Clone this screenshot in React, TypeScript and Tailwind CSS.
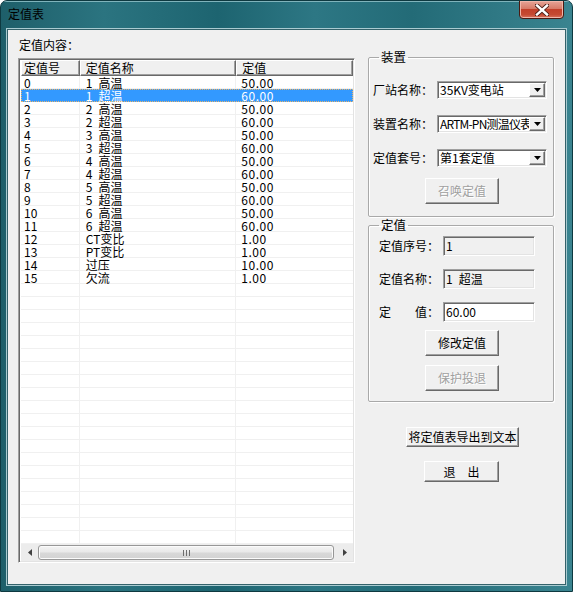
import React from "react";

const rows: [string, string, string][] = [
  ["0", "1\u2002高温", "50.00"],
  ["1", "1\u2002超温", "60.00"],
  ["2", "2\u2002高温", "50.00"],
  ["3", "2\u2002超温", "60.00"],
  ["4", "3\u2002高温", "50.00"],
  ["5", "3\u2002超温", "60.00"],
  ["6", "4\u2002高温", "50.00"],
  ["7", "4\u2002超温", "60.00"],
  ["8", "5\u2002高温", "50.00"],
  ["9", "5\u2002超温", "60.00"],
  ["10", "6\u2002高温", "50.00"],
  ["11", "6\u2002超温", "60.00"],
  ["12", "CT变比", "1.00"],
  ["13", "PT变比", "1.00"],
  ["14", "过压", "10.00"],
  ["15", "欠流", "1.00"],
];

const blank: [string, string, string][] = Array.from({ length: 21 }, () => ["", "", ""]);

const raised =
  "border border-t-white border-l-white border-r-[#696969] border-b-[#696969] shadow-[inset_-1px_-1px_0_#a0a0a0] bg-[#f0f0f0]";
const sunken =
  "border border-t-[#a0a0a0] border-l-[#a0a0a0] border-r-white border-b-white shadow-[inset_1px_1px_0_#696969,inset_-1px_-1px_0_#e3e3e3]";

function Btn({ label, disabled, className }: { label: string; disabled?: boolean; className: string }) {
  return (
    <button
      type="button"
      className={`${raised} ${className} flex items-center justify-center text-[12px] leading-[14px] ${
        disabled ? "text-[#a0a0a0] [text-shadow:1px_1px_0_#ffffff]" : "text-black"
      }`}
    >
      {label}
    </button>
  );
}

function Combo({ value, tight }: { value: string; tight?: boolean }) {
  return (
    <div className={`${sunken} w-[110px] h-[18px] bg-white flex items-center pl-[2px] pr-[1px]`}>
      <span
        className={`flex-1 overflow-hidden whitespace-nowrap leading-[14px] text-black ${
          tight ? "tracking-[-0.8px]" : ""
        }`}
      >
        {value}
      </span>
      <div className={`${raised} w-[16px] h-[14px] shrink-0 flex items-center justify-center`}>
        <svg width="7" height="4" viewBox="0 0 7 4">
          <path d="M0 0h7L3.5 4z" fill="#000" />
        </svg>
      </div>
    </div>
  );
}

function Field({ label, value, readOnly }: { label: string; value: string; readOnly?: boolean }) {
  return (
    <div className="flex items-center h-[20px]">
      <span className="w-[64px] shrink-0 leading-[14px] whitespace-pre">{label}</span>
      <div
        className={`${sunken} w-[92px] h-[20px] flex items-center pl-[2px] leading-[14px] whitespace-pre ${
          readOnly ? "bg-[#f0f0f0]" : "bg-white"
        }`}
      >
        {value}
      </div>
    </div>
  );
}

export default function App() {
  return (
    <div className="w-[573px] h-[592px] flex flex-col overflow-hidden rounded-t-[7px] border border-[#0e3940] bg-[linear-gradient(90deg,#1e5f6a_0%,#2b7480_18%,#1d6470_38%,#2d7784_55%,#236b77_72%,#3a8490_100%)] font-['Noto_Sans_CJK_SC',sans-serif] text-[12px] text-black">
      {/* Title bar */}
      <div className="h-[28px] shrink-0 flex items-start shadow-[inset_0_1px_0_#7fb3bb]">
        <span className="ml-[7px] mt-[5px] leading-[16px] text-[12px] text-black">定值表</span>
        <button
          type="button"
          className="ml-auto mr-[8px] -mt-px w-[45px] h-[19px] rounded-b-[4px] border border-[#4b1a12] bg-[linear-gradient(180deg,#e6a497_0%,#d77b68_45%,#c2402a_50%,#c54a32_80%,#d9745e_100%)] shadow-[inset_0_0_0_1px_#f0b6aa] flex items-center justify-center"
        >
          <svg width="14" height="12" viewBox="0 0 14 12">
            <path d="M2 1.5L12 10.5M12 1.5L2 10.5" stroke="#4a1d16" strokeWidth="4.2" strokeLinecap="square" />
            <path d="M2 1.5L12 10.5M12 1.5L2 10.5" stroke="#ffffff" strokeWidth="2.4" strokeLinecap="square" />
          </svg>
        </button>
      </div>

      {/* Client area */}
      <div className="mx-[6px] mb-[6px] flex-1 min-h-0 border border-[#34626a] shadow-[0_0_0_1px_#a9cbd1] bg-[#f0f0f0] flex">
        {/* Left column */}
        <div className="ml-[10px] mt-[8px] w-[337px] flex flex-col">
          <div className="leading-[14px] pl-[1px]">定值内容：</div>
          <div className={`${sunken} mt-[6px] h-[505px] bg-white p-[1px] flex flex-col`}>
            {/* header */}
            <div className="flex h-[16px] shrink-0 ml-px">
              <div className={`${raised} w-[59px] pl-[2px] leading-[14px]`}>定值号</div>
              <div className={`${raised} w-[157px] pl-[5px] leading-[14px]`}>定值名称</div>
              <div className={`${raised} w-[117px] pl-[5px] leading-[14px]`}>定值</div>
            </div>
            {/* rows */}
            <div className="flex-1 min-h-0 overflow-hidden ml-px">
              {[...rows, ...blank].map(([id, name, val], i) => {
                const sel = i === 1;
                return (
                  <div
                    key={i}
                    className={`flex h-[13px] leading-[13px] whitespace-pre ${
                      sel
                        ? "bg-[#3399ff] text-white outline outline-1 outline-dotted outline-[#e8b46c] -outline-offset-1"
                        : "shadow-[inset_0_-1px_0_#f0f0f0]"
                    }`}
                  >
                    <div className={`w-[59px] pl-[3px] ${sel ? "" : "shadow-[inset_-1px_-1px_0_#f0f0f0]"}`}>{id}</div>
                    <div className={`w-[157px] pl-[6px] ${sel ? "" : "shadow-[inset_-1px_-1px_0_#f0f0f0]"}`}>
                      {name}
                    </div>
                    <div className="w-[117px] pl-[5px] tracking-[0.5px]">{val}</div>
                  </div>
                );
              })}
            </div>
            {/* horizontal scrollbar */}
            <div className="h-[17px] shrink-0 ml-px flex items-center bg-[#ececec]">
              <div className="w-[17px] h-full flex items-center justify-center">
                <svg width="4" height="7" viewBox="0 0 4 7">
                  <path d="M4 0v7L0 3.5z" fill="#404040" />
                </svg>
              </div>
              <div className="flex-1 mr-[2px] h-[15px] rounded-[3px] border border-[#979797] bg-[linear-gradient(180deg,#f4f4f4_0%,#e9e9e9_45%,#d8d8d8_55%,#d2d2d2_100%)] shadow-[inset_0_0_0_1px_#fbfbfb] flex items-center justify-center gap-[2px]">
                <span className="w-px h-[6px] bg-[#6e6e6e]" />
                <span className="w-px h-[6px] bg-[#6e6e6e]" />
                <span className="w-px h-[6px] bg-[#6e6e6e]" />
              </div>
              <div className="w-[17px] h-full flex items-center justify-center">
                <svg width="4" height="7" viewBox="0 0 4 7">
                  <path d="M0 0v7L4 3.5z" fill="#404040" />
                </svg>
              </div>
            </div>
          </div>
        </div>

        {/* Right column */}
        <div className="ml-[13px] mt-[20px] w-[186px] flex flex-col">
          <fieldset className="h-[167px] border border-[#a9a9a9] shadow-[1px_1px_0_#ffffff,inset_1px_1px_0_#ffffff] rounded-[2px] pl-[4px]">
            <legend className="ml-[6px] px-[2px] leading-[14px] text-[12.5px]">装置</legend>
            <div className="mt-[17px] flex flex-col gap-[16px]">
              <div className="flex items-center">
                <span className="w-[64px] leading-[14px]">厂站名称：</span>
                <Combo value="35KV变电站" />
              </div>
              <div className="flex items-center">
                <span className="w-[64px] leading-[14px]">装置名称：</span>
                <Combo value="ARTM-PN测温仪表" tight />
              </div>
              <div className="flex items-center">
                <span className="w-[64px] leading-[14px]">定值套号：</span>
                <Combo value="第1套定值" />
              </div>
            </div>
            <Btn label="召唤定值" disabled className="mt-[11px] ml-[52px] w-[74px] h-[26px]" />
          </fieldset>

          <fieldset className="mt-px h-[184px] border border-[#a9a9a9] shadow-[1px_1px_0_#ffffff,inset_1px_1px_0_#ffffff] rounded-[2px] pl-[10px]">
            <legend className="ml-[0px] px-[2px] leading-[14px] text-[12.5px]">定值</legend>
            <div className="mt-[4px] flex flex-col gap-[13px]">
              <Field label="定值序号：" value="1" readOnly />
              <Field label="定值名称：" value={"1\u2002超温"} readOnly />
              <Field label={"定\u3000\u3000值："} value="60.00" />
            </div>
            <Btn label="修改定值" className="mt-[8px] ml-[46px] w-[74px] h-[26px]" />
            <Btn label="保护投退" disabled className="mt-[9px] ml-[46px] w-[74px] h-[26px]" />
          </fieldset>

          <Btn label="将定值表导出到文本" className="mt-[25px] ml-[38px] w-[113px] h-[20px]" />
          <Btn label="退　出" className="mt-[14px] ml-[56px] w-[75px] h-[21px]" />
        </div>
      </div>
    </div>
  );
}
